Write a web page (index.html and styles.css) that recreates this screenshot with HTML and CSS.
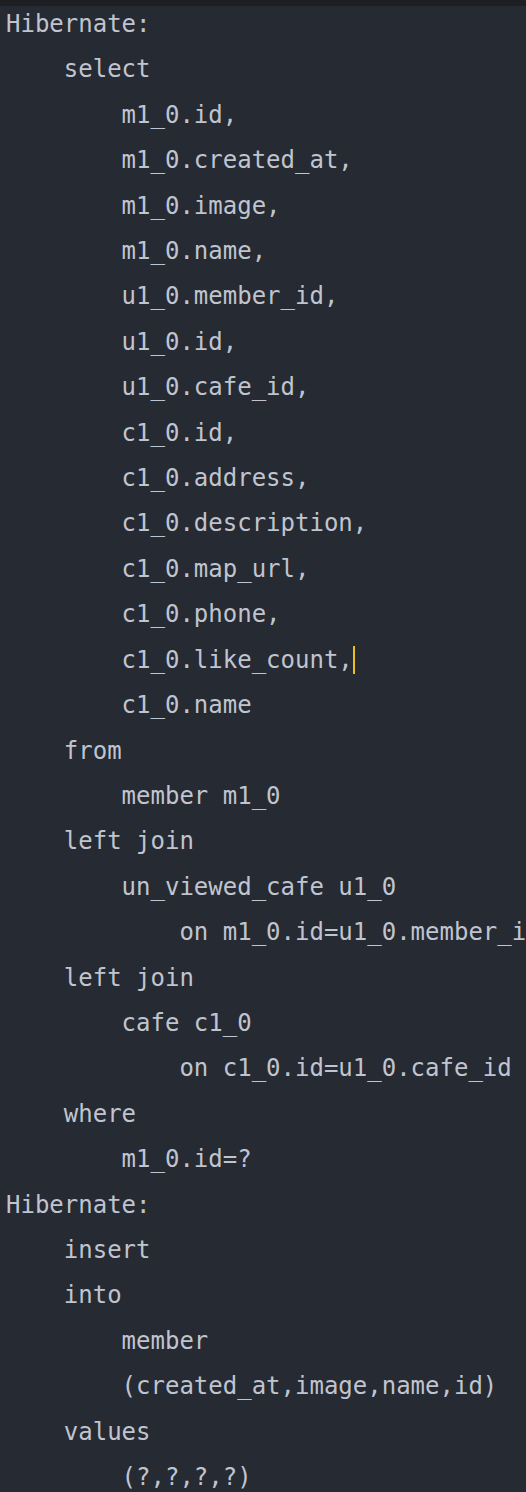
FILE: index.html
```html
<!DOCTYPE html>
<html>
<head>
<meta charset="utf-8">
<link rel="stylesheet" href="styles.css">
</head>
<body>
<div class="topbar"></div>
<pre class="log">Hibernate:
    select
        m1_0.id,
        m1_0.created_at,
        m1_0.image,
        m1_0.name,
        u1_0.member_id,
        u1_0.id,
        u1_0.cafe_id,
        c1_0.id,
        c1_0.address,
        c1_0.description,
        c1_0.map_url,
        c1_0.phone,
        c1_0.like_count,<span class="caret"></span>
        c1_0.name
    from
        member m1_0
    left join
        un_viewed_cafe u1_0
            on m1_0.id=u1_0.member_id
    left join
        cafe c1_0
            on c1_0.id=u1_0.cafe_id
    where
        m1_0.id=?
Hibernate:
    insert
    into
        member
        (created_at,image,name,id)
    values
        (?,?,?,?)</pre>
</body>
</html>
```
FILE: styles.css
```css
html, body {
  margin: 0;
  padding: 0;
  width: 526px;
  height: 1492px;
  overflow: hidden;
  background: #262a32;
}
.topbar {
  height: 6px;
  background: #1d1f23;
  margin-bottom: -6px;
}
.log {
  margin: 0;
  padding: 2px 0 0 6px;
  font-family: "DejaVu Sans Mono", "Liberation Mono", monospace;
  font-size: 24px;
  line-height: 45.4px;
  color: #c0c4cf;
  white-space: pre;
}
.caret {
  display: inline-block;
  width: 2px;
  height: 28px;
  background: #e8c21a;
  vertical-align: -6px;
}
```
